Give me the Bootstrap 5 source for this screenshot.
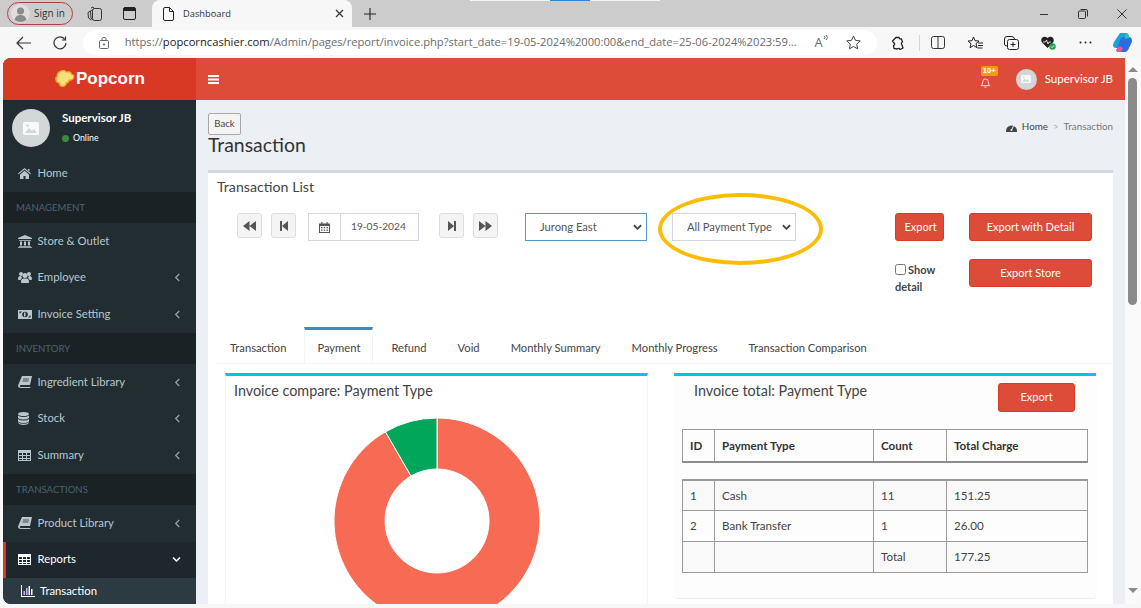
<!DOCTYPE html>
<html lang="en">
<head>
  <meta charset="UTF-8">
  <title>Dashboard</title>
  <link href="https://cdn.jsdelivr.net/npm/bootstrap@5.3.3/dist/css/bootstrap.min.css" rel="stylesheet">
  <style>
    html, body { height: 608px; overflow: hidden; }
    body { position: relative; background: #f7f7f7; font-family: "Lato", sans-serif; font-size: 12px; color: #444; }
    svg { display: block; flex: none; }

    /* browser chrome */
    .tab-strip { height: 27px; background: #cccccc; padding-left: 7px; color: #333; }
    .share-line { position: absolute; top: 0; height: 1px; background: #f4f4f4; }
    .share-blue { background: #2f86d8; }
    .signin-pill { width: 66px; height: 23px; border: 1px solid #b5403f; border-radius: 12px; gap: 4px; padding-left: 3px; font-family: "Open Sans", sans-serif; font-size: 10px; }
    .strip-first { width: 28.5px; }
    .strip-second { width: 34px; }
    .page-tab { width: 200px; height: 27px; margin-left: 16.5px; background: #f7f7f7; border-radius: 8px 8px 0 0; padding: 0 8px 0 11px; font-family: "Open Sans", sans-serif; font-size: 9.3px; }
    .page-tab span { margin-left: 9px; }
    .new-tab { width: 36px; }
    .win-btn { width: 39px; }
    .addr-bar { height: 31px; padding-left: 5px; }
    .addr-btn { width: 37px; }
    .addr-pill { width: 797px; height: 25px; margin-left: 4px; background: #fff; border-radius: 13px; padding-left: 16px; font-family: "Open Sans", sans-serif; font-size: 11.2px; color: #6b6b6b; white-space: nowrap; }
    .addr-pill b { font-weight: 400; color: #1a1a1a; }
    .addr-url { width: 674px; margin-left: 16px; overflow: hidden; }
    .addr-read { width: 29px; font-size: 13px; line-height: 15px; }
    .addr-end { width: 33px; }
    .tool-btn { width: 37px; }
    .tool-first { margin-left: 3.5px; }
    .tool-sep { width: 1px; height: 16px; margin-left: 2px; background: #d6d6d6; }

    /* app frame */
    .app-frame { height: 546px; margin-left: 3px; border-radius: 8px; overflow: hidden; position: relative; }
    .side-col { width: 193px; flex: none; background: #222d32; color: #b8c7ce; }
    .brand-box { height: 42px; background: #d73925; color: #fff; gap: 1px; padding-left: 52px; font-family: "Liberation Sans", sans-serif; font-weight: 700; font-size: 17px; }
    .user-box { height: 55px; padding: 9px 0 0 9px; color: #fff; gap: 12px; }
    .avatar-big { width: 38px; height: 38px; border-radius: 50%; background: #d2d6d8; }
    .avatar-small { width: 21px; height: 21px; border-radius: 50%; background: #d2d6d8; }
    .user-name { font-weight: 700; font-size: 11.5px; line-height: 18px; }
    .user-status { font-size: 8.8px; line-height: 12px; margin-top: 5px; gap: 4px; }
    .status-dot { width: 7px; height: 7px; border-radius: 50%; background: #3c8a3c; }
    .side-menu { list-style: none; margin: 0; padding: 0; }
    .side-item { height: 36.7px; padding: 0 15px; gap: 4.5px; font-size: 11.3px; }
    .side-icon { width: 15px; }
    .side-label { flex: 1; }
    .side-head { height: 31px; background: #1a2226; color: #4b646f; font-size: 9.6px; line-height: 31px; padding-left: 13px; }
    .side-active { background: #1e282c; color: #fff; border-left: 3px solid #d73925; padding-left: 12px; }
    .side-sub { height: 26px; background: #2c3b41; color: #fff; padding-left: 18px; gap: 5px; font-size: 11.3px; }

    .main-col { flex: 1; min-width: 0; }
    .top-bar { height: 42px; background: #dd4b39; color: #fff; padding: 0 12px; font-size: 11.5px; }
    .bell-wrap { position: relative; margin-right: 25px; padding-top: 6px; }
    .bell-badge { position: absolute; left: 1px; top: -4.5px; width: 17px; height: 10px; background: #f39c12; border-radius: 2px; font-family: "Liberation Sans", sans-serif; font-weight: 700; font-size: 7.5px; line-height: 10px; text-align: center; color: #fff; }
    .content-wrap { height: 504px; background: #ecf0f5; padding: 13px 12px 0; overflow: hidden; }
    .back-btn { height: 22px; width: 33px; padding: 0; background: #f4f4f4; border: 1px solid #a8a8a8; border-radius: 2px; font-size: 9.6px; color: #444; }
    .page-title { font-size: 19.4px; line-height: 22px; margin: -1px 0 0; font-weight: 400; color: #333; }
    .crumb-row { font-size: 9.8px; color: #444; gap: 5px; padding-top: 6px; }
    .crumb-off { color: #777; }
    .crumb-sep { color: #aaa; }
    .list-box { margin-top: 14px; height: 440px; background: #fff; border-top: 3px solid #d2d6de; }
    .box-title { font-size: 14.2px; line-height: 20px; padding: 4px 0 0 9px; color: #444; font-weight: 400; margin: 0; }

    .ctl-row { margin-top: 16px; padding-left: 29px; height: 80px; }
    .nav-btn { width: 25px; height: 25px; padding: 0; background: #f4f4f4; border: 1px solid #ddd; border-radius: 3px; }
    .nav-near { margin-left: 9px; }
    .nav-after { margin-left: 20px; }
    .date-group { width: 111px; height: 28px; margin-left: 12px; flex-wrap: nowrap; }
    .date-group .input-group-text { width: 33px; padding: 0; background: #fff; border: 1px solid #d2d6de; border-radius: 0; }
    .date-group .form-control { padding: 0 0 0 10px; border: 1px solid #d2d6de; border-radius: 0; font-size: 10.2px; color: #555; }
    .plain-select { height: 28px; padding: 0 0 0 14px; border: 1px solid #d2d6de; border-radius: 0; font-size: 11.2px; color: #555; background-image: url("data:image/svg+xml,%3csvg xmlns='http://www.w3.org/2000/svg' viewBox='0 0 10 7'%3e%3cpath fill='none' stroke='%23444' stroke-width='2' d='m1 1 4 4 4-4'/%3e%3c/svg%3e"); background-size: 9px 7px; background-position: right 4px center; }
    .select-store { width: 122px; margin-left: 27px; border-color: #4f9ac7; }
    .select-pay { width: 124px; margin-left: 25px; }
    .red-btn { height: 28px; padding: 0; background: #dd4b39; border: 1px solid #d73925; border-radius: 3px; color: #fff; font-size: 11px; }
    .red-btn:hover { background: #d73925; color: #fff; }
    .export-col { width: 50px; margin-left: 99px; }
    .export-col .red-btn { width: 49px; padding-left: 2px; }
    .show-check { font-weight: 700; font-size: 11px; line-height: 17px; margin-top: 20px; width: 50px; }
    .show-check input { width: 11px; height: 11px; margin: 0 2px 0 0; vertical-align: -1px; }
    .show-check label { display: inline; }
    .detail-col { width: 123px; margin-left: 24px; gap: 18px; }
    .detail-col .red-btn { width: 123px; }
    .ring-mark { position: absolute; left: 658px; top: 193px; width: 165px; height: 72px; border: 4px solid #fbbc05; border-radius: 50%; }

    .tab-row { margin: 34px 0 0 9px; padding: 0; border-bottom: 1px solid #f4f4f4; gap: 5px; flex-wrap: nowrap; height: 37px; }
    .tab-row .nav-link { height: 36px; margin: 0; padding: 0 13px; border: 0; border-top: 3px solid transparent; border-radius: 0; font-size: 11.2px; line-height: 35px; color: #444; white-space: nowrap; }
    .tab-row .nav-link.active { border-top-color: #3c8dbc; border-left: 1px solid #f4f4f4; border-right: 1px solid #f4f4f4; padding: 0 12px; color: #444; }
    .panels { margin: 9px 0 0 17px; gap: 26px; }
    .panel-left, .panel-right { border-top: 3px solid #00c0ef; flex: none; background: #fff; }
    .panel-left { width: 423px; height: 240px; border-left: 1px solid #f4f4f4; border-right: 1px solid #f4f4f4; }
    .panel-right { width: 422px; height: 225px; background: #fdfdfd; border-radius: 0 0 4px 4px; box-shadow: 0 1px 1px rgba(0,0,0,.08); padding: 0 8px; }
    .panel-title { font-size: 14.35px; line-height: 24px; margin: 0; font-weight: 400; color: #444; }
    .panel-left .panel-title { padding: 3px 0 0 8px; }
    .donut-chart { margin: 15px 0 0 108px; }
    .right-head { height: 53px; padding: 3px 13px 0 12px; }
    .right-head .red-btn { width: 77px; height: 29px; margin-top: 4px; }
    .pay-table { width: 405px; margin: 0; table-layout: fixed; border-collapse: collapse; font-size: 11.6px; color: #444; }
    .pay-table th, .pay-table td { height: 31px; padding: 0 7px; border: 1px solid #9a9a9a; vertical-align: middle; }
    .pay-table th { height: 32px; color: #333; border-bottom: 2px solid #8c8c8c; }
    .body-table { margin-top: 16px; }
    .body-table tr:first-child td { border-top: 2px solid #9a9a9a; }
    .row-shade td { background: #f9f9f9; }

    .scroll-rail { width: 16px; flex: none; background: #fafafa; padding: 20px 3px 0; position: relative; }
    .scroll-thumb { width: 9px; height: 227px; background: #8b8b8b; border-radius: 5px; }
    .scroll-up, .scroll-down { position: absolute; left: 3px; width: 0; height: 0; border-left: 5px solid transparent; border-right: 5px solid transparent; }
    .scroll-up { top: 9px; border-bottom: 5px solid #8b8b8b; }
    .scroll-down { bottom: 11px; border-top: 5px solid #8b8b8b; }
  </style>
</head>
<body>
  <svg width="0" height="0" class="position-absolute">
    <symbol id="i-chev" viewBox="0 0 8 10"><path d="M6 1 2 5l4 4" fill="none" stroke="currentColor" stroke-width="1.5"/></symbol>
    <symbol id="i-book" viewBox="0 0 14 12"><path d="M4 0h10l-2 9H2.500Q1.700 9 1.800 10t1.200 1h9.500l-.3 1H3Q0 12 0 9.500Z" fill="currentColor"/><path d="M5 3h6M4.500 5h6" stroke="#222d32" stroke-width=".8"/></symbol>
    <symbol id="i-table" viewBox="0 0 13 11"><path d="M0 0h13v11H0Z" fill="currentColor"/><path d="M1 3h3v2H1ZM5 3h3v2H5ZM9 3h3v2H9ZM1 6h3v2H1ZM5 6h3v2H5ZM9 6h3v2H9ZM1 9h3v1H1ZM5 9h3v1H5ZM9 9h3v1H9Z" fill="#222d32"/></symbol>
    <symbol id="i-photo" viewBox="0 0 16 13"><rect width="16" height="13" rx="1.500" fill="#fff" opacity=".85"/><path d="M2 11 6 6l3 3 2-2 3 4Z" fill="#d2d6d8"/><circle cx="4.500" cy="3.500" r="1.300" fill="#d2d6d8"/></symbol>
  </svg>

  <span class="share-line" style="left:470px;width:80px"></span>
  <span class="share-line share-blue" style="left:550px;width:40px"></span>
  <span class="share-line" style="left:590px;width:70px"></span>

  <!-- browser tabs -->
  <div class="tab-strip d-flex align-items-center">
    <div class="signin-pill d-flex align-items-center">
      <svg width="19" height="19" viewBox="0 0 19 19"><circle cx="9.500" cy="9.500" r="9.500" fill="#dedede"/><circle cx="9.500" cy="7" r="3.500" fill="#8a8a8a"/><path d="M3.500 16q1-5 6-5t6 5q-6 4-12 0Z" fill="#8a8a8a"/></svg>
      <span>Sign in</span>
    </div>
    <div class="strip-first d-flex justify-content-end">
      <svg width="15" height="15" viewBox="0 0 15 15" fill="none" stroke="#333"><rect x="5.500" y="2.500" width="9" height="12" rx="2"/><path d="M5.500 4 3.500 5 4 12l1.500 1.500M3.500 5 1 6.500l.5 5.500 3 2M7 2.500 6 1 4 2"/></svg>
    </div>
    <div class="strip-second d-flex justify-content-end">
      <svg width="13" height="13" viewBox="0 0 13 13" fill="none" stroke="#222"><rect x=".5" y=".5" width="12" height="12" rx="1.500"/><path d="M1 1h11v2.500H1Z" fill="#222"/></svg>
    </div>
    <div class="page-tab d-flex align-items-center">
      <svg width="11" height="14" viewBox="0 0 11 14" fill="none" stroke="#222"><path d="M.5 2q0-1.500 1.500-1.500h4.500l4 4V12q0 1.500-1.500 1.500H2Q.5 13.500.5 12ZM6.500.5v4h4"/></svg>
      <span class="flex-grow-1">Dashboard</span>
      <svg width="9" height="9" viewBox="0 0 9 9" stroke="#333" stroke-width="1.200"><path d="m1 1 7 7M8 1 1 8"/></svg>
    </div>
    <div class="new-tab d-flex justify-content-center">
      <svg width="12" height="12" viewBox="0 0 12 12" stroke="#222" stroke-width="1.100"><path d="M6 0v12M0 6h12"/></svg>
    </div>
    <div class="flex-grow-1"></div>
    <div class="win-btn d-flex justify-content-center"><svg width="10" height="10" viewBox="0 0 10 10" stroke="#333"><path d="M1 5.500h8"/></svg></div>
    <div class="win-btn d-flex justify-content-center"><svg width="10" height="10" viewBox="0 0 10 10" fill="none" stroke="#333"><rect x=".5" y="2" width="7" height="7.500" rx="1"/><path d="M2.500 .5h5.500q1.500 0 1.500 1.500v5.500"/></svg></div>
    <div class="win-btn d-flex justify-content-center"><svg width="10" height="10" viewBox="0 0 10 10" stroke="#333"><path d="m.5.5 9 9M9.500.5l-9 9"/></svg></div>
  </div>

  <!-- address bar -->
  <div class="addr-bar d-flex align-items-center">
    <div class="addr-btn d-flex justify-content-center"><svg width="15" height="14" viewBox="0 0 15 14" fill="none" stroke="#333" stroke-width="1.200"><path d="M15 7H1M7 1 1 7l6 6"/></svg></div>
    <div class="addr-btn d-flex justify-content-center"><svg width="14" height="14" viewBox="0 0 14 14" fill="none" stroke="#333" stroke-width="1.200"><path d="M12 3.500A6 6 0 1 0 13 7"/><path d="M12.500.5v3.500H9"/></svg></div>
    <div class="addr-pill d-flex align-items-center">
      <svg width="10" height="12" viewBox="0 0 10 12" fill="none" stroke="#666"><rect x=".5" y="3.500" width="9" height="8" rx="1"/><path d="M3 3.500V2q0-1.500 2-1.500T7 2v1.500"/><circle cx="5" cy="7.500" r=".7" fill="#666"/></svg>
      <div class="addr-url">https://<b>popcorncashier.com</b>/Admin/pages/report/invoice.php?start_date=19-05-2024%2000:00&amp;end_date=25-06-2024%2023:59...</div>
      <div class="addr-read d-flex justify-content-end align-items-start">
        <span>A</span>
        <svg width="5" height="7" viewBox="0 0 5 7" fill="none" stroke="#666"><path d="M1 1q2 1.500 0 3M3 0q3 2.500 0 5"/></svg>
      </div>
      <div class="addr-end d-flex justify-content-end"><svg width="15" height="15" viewBox="0 0 15 15" fill="none" stroke="#444"><path d="m7.500 1 2 4.300 4.700.6-3.500 3.200.9 4.700-4.100-2.300-4.100 2.300.9-4.700L.8 5.900l4.700-.6Z"/></svg></div>
    </div>
    <div class="tool-btn tool-first d-flex justify-content-center"><svg width="14" height="14" viewBox="0 0 14 14" fill="none" stroke="#222" stroke-width="1.300"><path d="M5 1.500h3q.5 2 2.500 1.500l1 3q-2 1-.5 3L12 12l-3 1.500q-1-2-3-.5l-3-.5-.5-3q2-1 .5-2.500l-1.500-2Z"/></svg></div>
    <div class="tool-sep"></div>
    <div class="tool-btn d-flex justify-content-center"><svg width="14" height="13" viewBox="0 0 14 13" fill="none" stroke="#333"><rect x=".5" y=".5" width="13" height="12" rx="2"/><path d="M7 .5v12"/></svg></div>
    <div class="tool-btn d-flex justify-content-center"><svg width="15" height="14" viewBox="0 0 15 14" fill="none" stroke="#222"><path d="m5.500 1 1.500 3.700 4 .3-3 2.700 1 4-3.500-2.200L2 11.700l1-4-3-2.700 4-.3ZM10 7h5M10 9.500h5M9.500 12h5"/></svg></div>
    <div class="tool-btn d-flex justify-content-center"><svg width="15" height="14" viewBox="0 0 15 14" fill="none" stroke="#222"><rect x="3.500" y="3.500" width="11" height="10" rx="2"/><path d="M3 10Q.5 10 .5 8V3Q.5.500 3 .5h5q2 0 2.500 2.500M9 6v5M6.500 8.500h5"/></svg></div>
    <div class="tool-btn d-flex justify-content-center"><svg width="15" height="14" viewBox="0 0 15 14"><path d="M6.500 12 1 6.500Q-.5 4 1 2T5 1l1.500 1L8 1q2.500-1 4 1t0 4.500Z" fill="#222"/><path d="m2 6 2.500 0 1-2 1.500 4 1-2h2" stroke="#fff" fill="none" stroke-width=".8"/><circle cx="11.500" cy="10.500" r="3.200" fill="#1f9d4d"/><path d="m10 10.500 1 1 2-2" stroke="#fff" fill="none"/></svg></div>
    <div class="tool-btn d-flex justify-content-center"><svg width="13" height="3" viewBox="0 0 13 3" fill="#222"><circle cx="1.500" cy="1.500" r="1"/><circle cx="6.500" cy="1.500" r="1"/><circle cx="11.500" cy="1.500" r="1"/></svg></div>
    <div class="tool-btn d-flex justify-content-center"><svg width="21" height="21" viewBox="0 0 21 21"><path d="M8 1h6q2 0 2.500 2L13 14q-.5 2-2.500 2H4q-3 0-3-3 0-1 1-3Z" fill="#18a5d8"/><path d="M13 5h4q3 0 3 4 0 1-1 3l-3 6q-1 2-3 2H7q-2 0-2.500-2L8 8q1-3 5-3Z" fill="#2d6be0"/><path d="M14 1q2 0 2.500 2l1 3-5 1Z" fill="#27c4a8"/><path d="M9 20H6q-2 0-2-2l3-4 4 2Z" fill="#e6569a"/></svg></div>
  </div>

  <!-- page -->
  <div class="app-frame d-flex">
    <aside class="side-col">
      <div class="brand-box d-flex align-items-center">
        <svg width="20" height="18" viewBox="0 0 17 17" preserveAspectRatio="none"><path d="M5 1q3-1.500 4.500 1 4-1 4.500 2 3 1 1.500 4-1 2-3.500 1.500-.5 3-2.500 2.500 0 3-3 3.500-3 0-2.500-3Q1 12 1 9.500 0 7 2 6 1.500 2.500 5 1Z" fill="#f7e07a" stroke="#f5a623" stroke-width="1.200"/></svg>
        <span>Popcorn</span>
      </div>
      <div class="user-box d-flex">
        <div class="avatar-big d-flex align-items-center justify-content-center"><svg width="16" height="13"><use href="#i-photo"/></svg></div>
        <div>
          <div class="user-name">Supervisor JB</div>
          <div class="user-status d-flex align-items-center"><span class="status-dot"></span>Online</div>
        </div>
      </div>
      <ul class="side-menu">
        <li class="side-item d-flex align-items-center"><span class="side-icon"><svg width="13" height="11" viewBox="0 0 13 11" fill="currentColor"><path d="M6.500 0 13 5.500l-.7.8L6.500 1.500.7 6.300 0 5.500ZM2 6.500l4.500-3.800L11 6.500V11H7.500V8h-2v3H2ZM10 1h1.500v2.500L10 2.300Z"/></svg></span><span class="side-label">Home</span></li>
        <li class="side-head">MANAGEMENT</li>
        <li class="side-item d-flex align-items-center"><span class="side-icon"><svg width="14" height="13" viewBox="0 0 14 13" fill="currentColor"><path d="M7 0 14 3v1H0V3ZM1 5h12v.8H1ZM2 6.500h2v4H2ZM6 6.500h2v4H6ZM10 6.500h2v4h-2ZM1 11h12v.8H1ZM0 12.200h14V13H0Z"/></svg></span><span class="side-label">Store &amp; Outlet</span></li>
        <li class="side-item d-flex align-items-center"><span class="side-icon"><svg width="14" height="11" viewBox="0 0 14 11" fill="currentColor"><circle cx="3" cy="2" r="2"/><circle cx="11" cy="2" r="2"/><circle cx="7" cy="3.500" r="2.500"/><path d="M0 7q0-3 2.500-3l1 .5.500 1.500q-1 .5-1.500 2H1Q0 8 0 7ZM14 7q0-3-2.500-3l-1 .5L10 6q1 .5 1.500 2H13q1 0 1-1ZM3.500 11q-.500 0-.500-1 0-3.500 2.500-3.500h3Q11 6.500 11 10q0 1-.5 1Z"/></svg></span><span class="side-label">Employee</span><svg width="7" height="9" class="opacity-75"><use href="#i-chev"/></svg></li>
        <li class="side-item d-flex align-items-center"><span class="side-icon"><svg width="14" height="9" viewBox="0 0 14 9"><path d="M0 0h14v9H0Z" fill="currentColor"/><circle cx="7" cy="4.500" r="2.800" fill="#222d32"/><path d="M6 2.500h1.500v4H6Z" fill="currentColor"/><path d="M1.500 1.500H4L1.500 4ZM12.500 7.500H10L12.500 5Z" fill="#222d32"/></svg></span><span class="side-label">Invoice Setting</span><svg width="7" height="9" class="opacity-75"><use href="#i-chev"/></svg></li>
        <li class="side-head">INVENTORY</li>
        <li class="side-item d-flex align-items-center"><span class="side-icon"><svg width="14" height="12"><use href="#i-book"/></svg></span><span class="side-label">Ingredient Library</span><svg width="7" height="9" class="opacity-75"><use href="#i-chev"/></svg></li>
        <li class="side-item d-flex align-items-center"><span class="side-icon"><svg width="11" height="13" viewBox="0 0 11 13" fill="currentColor"><ellipse cx="5.500" cy="2" rx="5.500" ry="2"/><path d="M0 3.500Q2 5 5.500 5T11 3.500V6Q9 7.500 5.500 7.500T0 6ZM0 7q2 1.500 5.500 1.500T11 7v2.500Q9 11 5.500 11T0 9.500ZM0 10.200q2 1.500 5.500 1.500t5.500-1.500V11q-1.500 2-5.500 2T0 11Z"/></svg></span><span class="side-label">Stock</span><svg width="7" height="9" class="opacity-75"><use href="#i-chev"/></svg></li>
        <li class="side-item d-flex align-items-center"><span class="side-icon"><svg width="13" height="11"><use href="#i-table"/></svg></span><span class="side-label">Summary</span><svg width="7" height="9" class="opacity-75"><use href="#i-chev"/></svg></li>
        <li class="side-head">TRANSACTIONS</li>
        <li class="side-item d-flex align-items-center"><span class="side-icon"><svg width="14" height="12"><use href="#i-book"/></svg></span><span class="side-label">Product Library</span><svg width="7" height="9" class="opacity-75"><use href="#i-chev"/></svg></li>
        <li class="side-item side-active d-flex align-items-center"><span class="side-icon"><svg width="13" height="11"><use href="#i-table"/></svg></span><span class="side-label">Reports</span><svg width="9" height="7" viewBox="0 0 9 7" fill="none" stroke="currentColor" stroke-width="1.500"><path d="m1 1.500 3.500 3.500L8 1.500"/></svg></li>
        <li class="side-sub d-flex align-items-center"><svg width="14" height="12" viewBox="0 0 14 12" fill="#fff"><path d="M0 0h1v11h13v1H0Z"/><path d="M2.500 6h1.500v4H2.500ZM5 3h1.500v7H5Z" fill="#c7b6ff"/><path d="M7.500 1H9v9H7.500ZM10 4h1.500v6H10Z"/></svg><span>Transaction</span></li>
      </ul>
    </aside>

    <div class="main-col">
      <div class="top-bar d-flex align-items-center">
        <svg width="11" height="9" viewBox="0 0 11 9" fill="#fff"><path d="M0 0h11v2H0ZM0 3.500h11v2H0ZM0 7h11v2H0Z"/></svg>
        <div class="flex-grow-1"></div>
        <div class="bell-wrap">
          <svg width="11" height="11" viewBox="0 0 13 14" fill="none" stroke="#fff"><path d="M1 11q2-1.500 2-5 0-3.500 3.500-3.500T10 6q0 3.500 2 5ZM5 12.500q1.500 1.500 3 0"/></svg>
          <span class="bell-badge">10+</span>
        </div>
        <div class="avatar-small d-flex align-items-center justify-content-center"><svg width="10" height="8" viewBox="0 0 16 13"><use href="#i-photo"/></svg></div>
        <span class="ms-2">Supervisor JB</span>
      </div>

      <div class="content-wrap">
        <div class="d-flex justify-content-between">
          <div>
            <button type="button" class="btn back-btn">Back</button>
            <h1 class="page-title">Transaction</h1>
          </div>
          <div class="crumb-row d-flex">
            <svg width="11" height="9" viewBox="0 0 11 9" class="mt-1"><path d="M0 8a5.500 5.500 0 1 1 11 0v1H0Z" fill="#444"/><path d="m5.500 7 2-4" stroke="#ecf0f5"/><circle cx="5.500" cy="7" r="1" fill="#ecf0f5"/></svg>
            <span>Home</span><span class="crumb-sep">&gt;</span><span class="crumb-off">Transaction</span>
          </div>
        </div>

        <div class="list-box">
          <h3 class="box-title">Transaction List</h3>
          <div class="ctl-row d-flex align-items-start">
            <button type="button" class="btn nav-btn d-flex align-items-center justify-content-center"><svg width="13" height="10" viewBox="0 0 13 10" fill="#555"><path d="M6.500 0v10L0 5ZM13 0v10L6.500 5Z"/></svg></button>
            <button type="button" class="btn nav-btn nav-near d-flex align-items-center justify-content-center"><svg width="8" height="10" viewBox="0 0 8 10" fill="#555"><path d="M0 0h2v10H0ZM8 0v10L2 5Z"/></svg></button>
            <div class="input-group date-group">
              <span class="input-group-text justify-content-center"><svg width="11" height="11" viewBox="0 0 11 11" fill="#555"><path d="M0 1.500h2.300V0h1.200v1.500h4V0h1.200v1.500H11V11H0Zm1 2.500v6h9V4Z"/><path d="M2 5h1.500v1.300H2ZM4.700 5h1.500v1.300H4.700ZM7.500 5H9v1.300H7.500ZM2 7.500h1.500v1.300H2ZM4.700 7.500h1.500v1.300H4.700ZM7.500 7.500H9v1.300H7.500Z"/></svg></span>
              <input type="text" class="form-control" value="19-05-2024">
            </div>
            <button type="button" class="btn nav-btn nav-after d-flex align-items-center justify-content-center"><svg width="8" height="10" viewBox="0 0 8 10" fill="#555"><path d="M0 0v10l6-5ZM6 0h2v10H6Z"/></svg></button>
            <button type="button" class="btn nav-btn nav-near d-flex align-items-center justify-content-center"><svg width="13" height="10" viewBox="0 0 13 10" fill="#555"><path d="M0 0v10l6.500-5ZM6.500 0v10L13 5Z"/></svg></button>
            <select class="form-select plain-select select-store"><option>Jurong East</option></select>
            <select class="form-select plain-select select-pay"><option>All Payment Type</option></select>
            <div class="export-col">
              <button type="button" class="btn red-btn">Export</button>
              <div class="show-check"><input type="checkbox" id="showDetail"><label for="showDetail">Show detail</label></div>
            </div>
            <div class="detail-col d-flex flex-column">
              <button type="button" class="btn red-btn">Export with Detail</button>
              <button type="button" class="btn red-btn">Export Store</button>
            </div>
          </div>

          <ul class="nav nav-tabs tab-row">
            <li class="nav-item"><a class="nav-link" href="#">Transaction</a></li>
            <li class="nav-item"><a class="nav-link active" href="#">Payment</a></li>
            <li class="nav-item"><a class="nav-link" href="#">Refund</a></li>
            <li class="nav-item"><a class="nav-link" href="#">Void</a></li>
            <li class="nav-item"><a class="nav-link" href="#">Monthly Summary</a></li>
            <li class="nav-item"><a class="nav-link" href="#">Monthly Progress</a></li>
            <li class="nav-item"><a class="nav-link" href="#">Transaction Comparison</a></li>
          </ul>

          <div class="panels d-flex align-items-start">
            <div class="panel-left">
              <h3 class="panel-title">Invoice compare: Payment Type</h3>
              <svg class="donut-chart" width="206" height="206" viewBox="-103 -103 206 206">
                <path d="M0-103A103 103 0 1 1-51.500-89.200L-26-45A52 52 0 1 0 0-52Z" fill="#f76b55" stroke="#fff"/>
                <path d="M0-103V-52A52 52 0 0 0-26-45L-51.500-89.200A103 103 0 0 1 0-103Z" fill="#00a65a" stroke="#fff"/>
              </svg>
            </div>
            <div class="panel-right">
              <div class="right-head d-flex justify-content-between align-items-start">
                <h3 class="panel-title">Invoice total: Payment Type</h3>
                <button type="button" class="btn red-btn">Export</button>
              </div>
              <table class="pay-table">
                <colgroup><col width="32"><col width="159"><col width="73"><col width="141"></colgroup>
                <thead><tr><th>ID</th><th>Payment Type</th><th>Count</th><th>Total Charge</th></tr></thead>
              </table>
              <table class="pay-table body-table">
                <colgroup><col width="32"><col width="159"><col width="73"><col width="141"></colgroup>
                <tbody>
                  <tr class="row-shade"><td>1</td><td>Cash</td><td>11</td><td>151.25</td></tr>
                  <tr><td>2</td><td>Bank Transfer</td><td>1</td><td>26.00</td></tr>
                  <tr class="row-shade"><td></td><td></td><td>Total</td><td>177.25</td></tr>
                </tbody>
              </table>
            </div>
          </div>
        </div>
      </div>
    </div>

    <div class="scroll-rail">
      <span class="scroll-up"></span>
      <div class="scroll-thumb"></div>
      <span class="scroll-down"></span>
    </div>
  </div>

  <span class="ring-mark"></span>

  <script src="https://cdn.jsdelivr.net/npm/bootstrap@5.3.3/dist/js/bootstrap.bundle.min.js"></script>
</body>
</html>
